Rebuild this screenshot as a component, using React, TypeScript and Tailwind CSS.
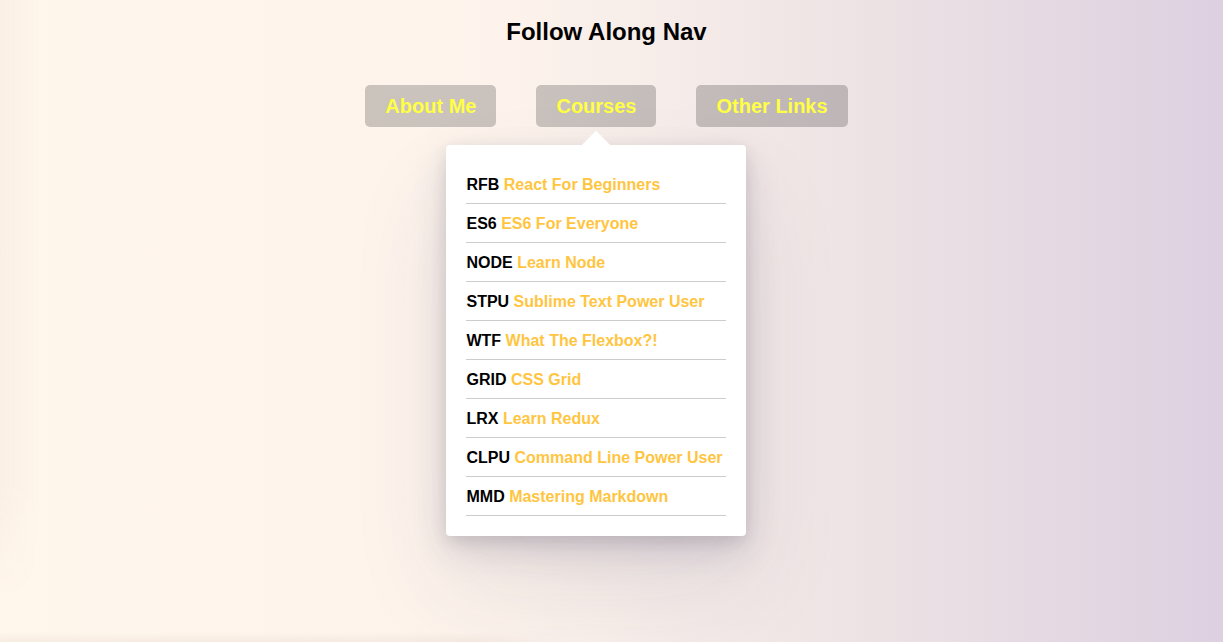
import React from "react";

const courses: [string, string][] = [
  ["RFB", "React For Beginners"],
  ["ES6", "ES6 For Everyone"],
  ["NODE", "Learn Node"],
  ["STPU", "Sublime Text Power User"],
  ["WTF", "What The Flexbox?!"],
  ["GRID", "CSS Grid"],
  ["LRX", "Learn Redux"],
  ["CLPU", "Command Line Power User"],
  ["MMD", "Mastering Markdown"],
];

export default function App() {
  return (
    <div
      className="relative h-[642px] w-full overflow-hidden bg-[linear-gradient(to_right,#fff6ec_0%,#fdf3ec_42%,#ece2e4_72%,#ddd0e1_100%)]"
      style={{ fontFamily: '"Liberation Sans", Arial, sans-serif' }}
    >
      {/* decorative edge shadows */}
      <div className="pointer-events-none absolute left-0 top-0 h-[600px] w-[40px] bg-[linear-gradient(to_right,rgba(120,90,60,0.04),rgba(120,90,60,0))] [mask-image:linear-gradient(to_bottom,black_80%,transparent)]" />
      <div className="pointer-events-none absolute bottom-0 left-0 h-[10px] w-[560px] bg-[linear-gradient(to_bottom,rgba(120,90,60,0),rgba(120,90,60,0.06))] [mask-image:linear-gradient(to_right,black_85%,transparent)]" />

      <div className="w-[1213px]">
        <h2 className="pt-[18px] text-center text-[24px] font-bold leading-[28px] text-black">
          Follow Along Nav
        </h2>
        <nav className="mt-[19px]">
          <ul className="flex justify-center">
            <li className="m-[20px]">
              <a className="inline-block rounded-[5px] bg-black/20 px-[20px] py-[10px] text-[20px] font-bold leading-[22px] text-[#ffff45]">
                About Me
              </a>
            </li>
            <li className="relative m-[20px]">
              <a className="inline-block rounded-[5px] bg-black/20 px-[20px] py-[10px] text-[20px] font-bold leading-[22px] text-[#ffff45]">
                Courses
              </a>
              <div className="absolute left-1/2 top-[60px] z-10 w-[300px] -translate-x-1/2 rounded-[4px] bg-white px-[20px] py-[20px] shadow-[0_50px_100px_rgba(50,50,93,0.1),0_15px_35px_rgba(50,50,93,0.15),0_5px_15px_rgba(0,0,0,0.1)]">
                <div className="absolute left-[140px] top-0 h-[20px] w-[20px] -translate-y-1/2 rotate-45 bg-white" />
                <ul className="relative">
                  {courses.map(([code, name]) => (
                    <li
                      key={code}
                      className="whitespace-nowrap border-b border-black/20 pb-[9px] pt-[11px] text-[16px] font-bold leading-[18px]"
                    >
                      <span className="text-black">{code}</span>{" "}
                      <a className="text-[#ffc53f]">{name}</a>
                    </li>
                  ))}
                </ul>
              </div>
            </li>
            <li className="m-[20px]">
              <a className="inline-block rounded-[5px] bg-black/20 px-[20px] py-[10px] text-[20px] font-bold leading-[22px] text-[#ffff45]">
                Other Links
              </a>
            </li>
          </ul>
        </nav>
      </div>
    </div>
  );
}
